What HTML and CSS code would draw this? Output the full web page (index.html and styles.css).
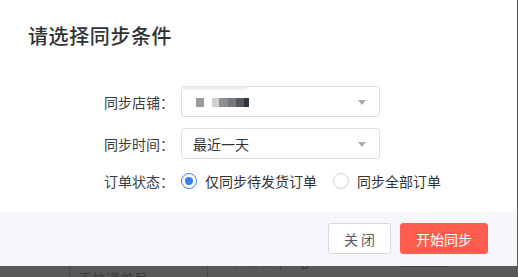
FILE: index.html
```html
<!DOCTYPE html>
<html lang="zh">
<head>
<meta charset="utf-8">
<link rel="stylesheet" href="styles.css">
</head>
<body>
<div class="page">
  <div class="dialog">
    <div class="title">请选择同步条件</div>
    <div class="form">
      <div class="row">
        <div class="label">同步店铺：</div>
        <div class="select">
          <div class="blur-band"></div>
          <div class="blur">
            <span class="px p1"></span><span class="px gap"></span><span class="px p2"></span><span class="px p3"></span><span class="px p4"></span><span class="px p5"></span><span class="px p6"></span>
          </div>
          <span class="arrow"></span>
        </div>
      </div>
      <div class="row">
        <div class="label">同步时间：</div>
        <div class="select">
          <span class="value">最近一天</span>
          <span class="arrow"></span>
        </div>
      </div>
      <div class="row radios">
        <div class="label">订单状态：</div>
        <label class="radio checked"><span class="circle"></span><span class="rtext">仅同步待发货订单</span></label>
        <label class="radio"><span class="circle"></span><span class="rtext">同步全部订单</span></label>
      </div>
    </div>
    <div class="footer">
      <button class="btn btn-close">关 闭</button>
      <button class="btn btn-primary">开始同步</button>
    </div>
  </div>
  <div class="backdrop">
    <div class="cell c1"></div>
    <div class="cell c2"><span class="ghost">无快递单号</span></div>
    <div class="cell c3"><span class="ghost up">件件件 | 0kg</span><span class="bar"></span></div>
  </div>
</div>
</body>
</html>
```
FILE: styles.css
```css
* { box-sizing: border-box; }
html, body { margin: 0; padding: 0; }
body {
  width: 518px;
  height: 277px;
  overflow: hidden;
  font-family: "Noto Sans CJK SC", "Noto Sans", sans-serif;
  color: #333;
  background: #585858;
}
.page { display: flex; flex-direction: column; height: 277px; }
.dialog {
  background: #fff;
  width: 517px;
  display: flex;
  flex-direction: column;
  padding-top: 24px;
}
.title {
  font-size: 20px;
  line-height: 24px;
  height: 24px;
  padding-left: 28px;
  color: #2f3338;
  font-weight: 500;
  letter-spacing: 0.6px;
}
.form {
  margin-top: 38px;
  padding-left: 104px;
  display: flex;
  flex-direction: column;
  gap: 11px;
}
.row { display: flex; align-items: center; height: 31px; }
.row.radios { height: 20px; margin-top: 1px; }
.label {
  width: 77px;
  font-size: 14px;
  line-height: 20px;
  color: #3a3d42;
}
.select {
  position: relative;
  width: 199px;
  height: 31px;
  border: 1px solid #dcdfe6;
  border-radius: 3px;
  display: flex;
  align-items: center;
  padding-left: 11px;
}
.value { font-size: 14px; line-height: 20px; color: #333; }
.arrow {
  position: absolute;
  right: 13px;
  top: 13px;
  width: 0;
  height: 0;
  border-left: 4px solid transparent;
  border-right: 4px solid transparent;
  border-top: 5px solid #a3abb9;
}
.blur-band {
  position: absolute;
  left: -1px;
  top: -1px;
  width: 66px;
  height: 4px;
  background: linear-gradient(to bottom, #e6e6e6, #f4f4f4);
  border-radius: 2px 2px 6px 0;
}
.blur { display: flex; height: 9px; margin-left: 3px; margin-top: 2px; }
.px { display: block; height: 9px; }
.p1 { width: 8px; background: #9a9a9a; }
.gap { width: 8px; background: transparent; }
.p2 { width: 7px; background: #cfcfcf; }
.p3 { width: 9px; background: #8b8e92; }
.p4 { width: 8px; background: #75787c; }
.p5 { width: 8px; background: #55585c; }
.p6 { width: 5px; background: #2e3540; }
.radio {
  display: flex;
  align-items: center;
  font-size: 14px;
  line-height: 20px;
  color: #333;
  margin-right: 16px;
}
.radio .circle {
  width: 16px;
  height: 16px;
  border: 1px solid #cfd2d6;
  border-radius: 50%;
  margin-right: 8px;
  position: relative;
  background: #fff;
}
.radio.checked .circle { border-color: #3b7df6; }
.radio.checked .circle::after {
  content: "";
  position: absolute;
  left: 3px;
  top: 3px;
  width: 8px;
  height: 8px;
  border-radius: 50%;
  background: #3b7df6;
}
.footer {
  margin-top: 21px;
  background: #f6f7fb;
  height: 54px;
  display: flex;
  justify-content: flex-end;
  align-items: flex-start;
  padding: 11px 29px 0 0;
  gap: 9px;
}
.btn {
  height: 31px;
  font-family: "Noto Sans CJK SC", "Noto Sans", sans-serif;
  font-size: 14px;
  line-height: 20px;
  border-radius: 3px;
  padding: 0;
  cursor: pointer;
}
.btn-close {
  width: 63px;
  background: #fff;
  border: 1px solid #d5d8de;
  color: #555a61;
}
.btn-primary {
  width: 88px;
  background: #ff5c50;
  border: 1px solid #ff5c50;
  color: #fff;
}
.backdrop {
  flex: 1;
  display: flex;
  background: #585858;
  overflow: hidden;
}
.cell { height: 11px; overflow: hidden; position: relative; }
.c1 { width: 69px; }
.c2 { width: 139px; border-left: 1px solid #4a4a4a; border-right: 1px solid #4a4a4a; }
.c3 { flex: 1; }
.ghost {
  position: absolute;
  top: 2px;
  left: 8px;
  font-size: 14px;
  line-height: 20px;
  color: #3c3c3c;
  white-space: nowrap;
}
.ghost.up { top: -17px; left: 25px; color: #333; }
.bar {
  position: absolute;
  left: 191px;
  top: 0;
  width: 48px;
  height: 1px;
  background: #3e3e3e;
}
```
